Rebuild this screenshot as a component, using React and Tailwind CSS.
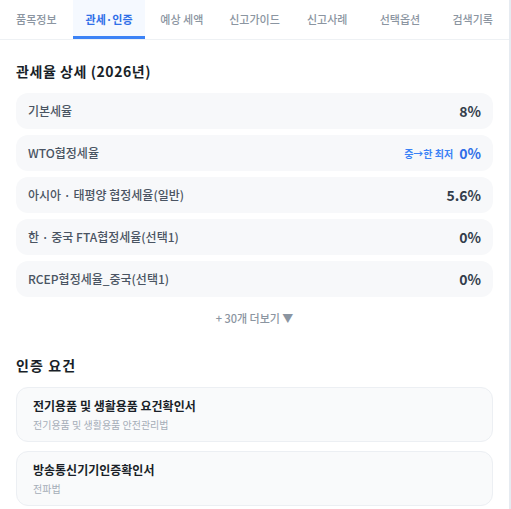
import { useState } from 'react';

const TABS = ['품목정보', '관세·인증', '예상 세액', '신고가이드', '신고사례', '선택옵션', '검색기록'];

const RATES = [
  { label: '기본세율', value: '8%' },
  { label: 'WTO협정세율', value: '0%', best: '중→한 최저' },
  { label: '아시아 · 태평양 협정세율(일반)', value: '5.6%' },
  { label: '한 · 중국 FTA협정세율(선택1)', value: '0%' },
  { label: 'RCEP협정세율_중국(선택1)', value: '0%' },
];

const CERTS = [
  { name: '전기용품 및 생활용품 요건확인서', law: '전기용품 및 생활용품 안전관리법' },
  { name: '방송통신기기인증확인서', law: '전파법' },
];

export default function App() {
  const [tab, setTab] = useState(1);

  return (
    <div
      className="min-h-[509px] w-full bg-white border-r-2 border-[#e6ebf1]"
      style={{ fontFamily: '"Noto Sans CJK KR", "Noto Sans", sans-serif' }}
    >
      <nav className="flex h-10 border-b border-[#eef1f4]">
        {TABS.map((t, i) => (
          <button
            key={t}
            onClick={() => setTab(i)}
            className={
              i === tab
                ? 'flex-1 border-b-[3px] border-[#3b82f6] bg-[#f5f9ff] pt-[3px] text-[11px] font-bold text-[#2f6fe8]'
                : 'flex-1 text-[11px] font-medium text-[#8b95a1]'
            }
          >
            {t}
          </button>
        ))}
      </nav>

      <section className="px-4 pt-[21px]">
        <h2 className="text-[14px] font-bold tracking-[0.04em] text-[#191f28]">관세율 상세 (2026년)</h2>

        <div className="mt-[11px] flex flex-col gap-[6px]">
          {RATES.map((r) => (
            <div key={r.label} className="flex h-9 items-center justify-between rounded-xl bg-[#f7f8fa] px-3">
              <span className="text-[12px] font-medium text-[#4a5462]">{r.label}</span>
              <span className="flex items-center gap-[6px]">
                {r.best ? <span className="text-[10px] font-semibold text-[#3b82f6]">{r.best}</span> : null}
                <span className={r.best ? 'text-[14px] font-bold text-[#2f6fe8]' : 'text-[14px] font-semibold text-[#333d4b]'}>
                  {r.value}
                </span>
              </span>
            </div>
          ))}
        </div>

        <div className="mt-[13px] text-center text-[11px] font-medium text-[#8b95a1]">+ 30개 더보기 ▼</div>
      </section>

      <section className="px-4 pt-[28px]">
        <h2 className="text-[14px] font-bold tracking-[0.08em] text-[#191f28]">인증 요건</h2>

        <div className="mt-[11px] flex flex-col gap-[9px]">
          {CERTS.map((c) => (
            <div key={c.name} className="rounded-xl border border-[#eceff3] bg-[#f9fafb] px-4 py-[9px]">
              <div className="text-[12px] font-bold text-[#191f28]">{c.name}</div>
              <div className="mt-[2px] text-[10px] text-[#a5adb8]">{c.law}</div>
            </div>
          ))}
        </div>
      </section>
    </div>
  );
}
